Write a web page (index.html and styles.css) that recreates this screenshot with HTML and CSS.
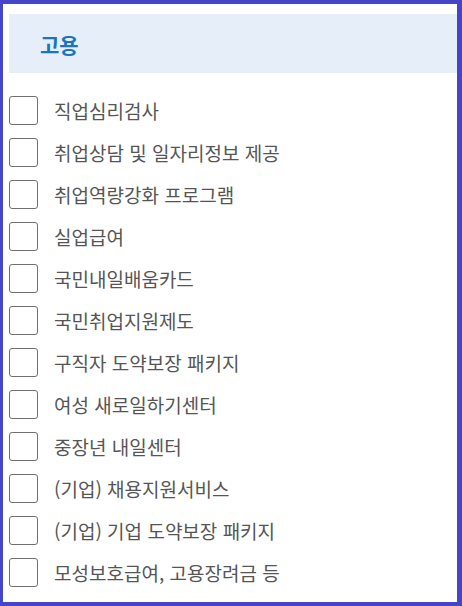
FILE: index.html
```html
<!DOCTYPE html>
<html lang="ko">
<head>
<meta charset="utf-8">
<title>고용</title>
<link rel="stylesheet" href="styles.css">
</head>
<body>
<div class="panel">
  <div class="panel-head">고용</div>
  <ul class="options">
    <li class="option"><span class="box"></span><span class="label">직업심리검사</span></li>
    <li class="option"><span class="box"></span><span class="label">취업상담 및 일자리정보 제공</span></li>
    <li class="option"><span class="box"></span><span class="label">취업역량강화 프로그램</span></li>
    <li class="option"><span class="box"></span><span class="label">실업급여</span></li>
    <li class="option"><span class="box"></span><span class="label">국민내일배움카드</span></li>
    <li class="option"><span class="box"></span><span class="label">국민취업지원제도</span></li>
    <li class="option"><span class="box"></span><span class="label">구직자 도약보장 패키지</span></li>
    <li class="option"><span class="box"></span><span class="label">여성 새로일하기센터</span></li>
    <li class="option"><span class="box"></span><span class="label">중장년 내일센터</span></li>
    <li class="option"><span class="box"></span><span class="label">(기업) 채용지원서비스</span></li>
    <li class="option"><span class="box"></span><span class="label">(기업) 기업 도약보장 패키지</span></li>
    <li class="option"><span class="box"></span><span class="label">모성보호급여, 고용장려금 등</span></li>
  </ul>
</div>
</body>
</html>
```

FILE: styles.css
```css
html, body {
  margin: 0;
  padding: 0;
  background: #ffffff;
}

.panel {
  box-sizing: border-box;
  width: 462px;
  height: 606px;
  border-style: solid;
  border-color: #4545cc;
  border-width: 4px 5px 4px 3px;
  padding: 10px 0 0 6px;
  font-family: "Noto Sans CJK KR", "Noto Sans", sans-serif;
  overflow: hidden;
}

.panel-head {
  height: 59px;
  background: #e6eff9;
  display: flex;
  align-items: center;
  padding-left: 31px;
  font-size: 21px;
  font-weight: 700;
  color: #1b75bc;
}

.options {
  list-style: none;
  margin: 0;
  padding: 16px 0 0 0;
}

.option {
  height: 42px;
  display: flex;
  align-items: center;
}

.box {
  box-sizing: border-box;
  width: 29px;
  height: 29px;
  border: 1px solid #6f6f6f;
  border-radius: 3px;
  flex: none;
}

.label {
  margin-left: 16px;
  font-size: 19px;
  color: #555555;
}
```
